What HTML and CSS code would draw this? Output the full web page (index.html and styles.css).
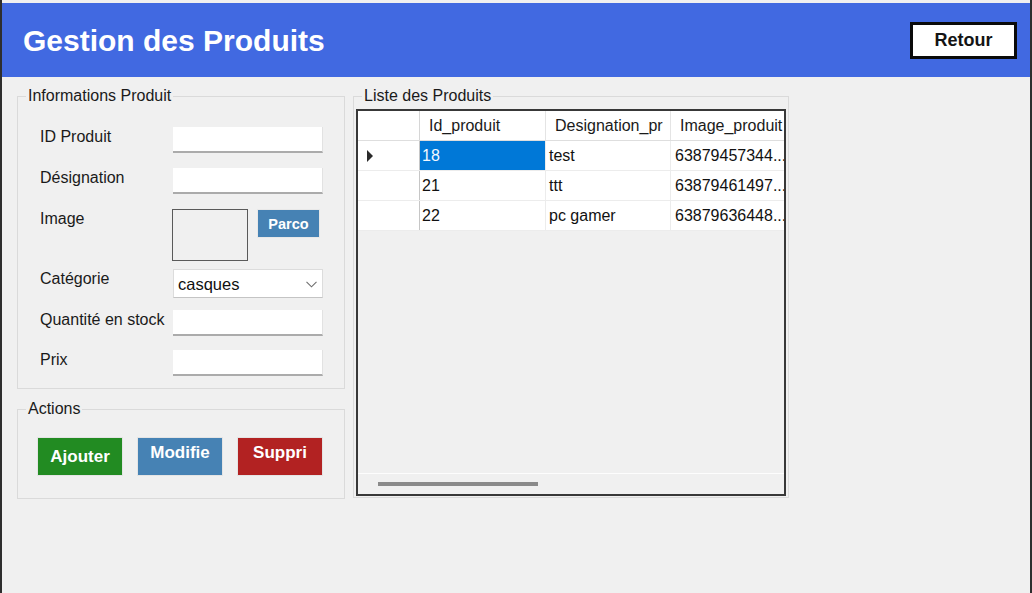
FILE: index.html
```html
<!DOCTYPE html>
<html lang="fr">
<head>
<meta charset="utf-8">
<title>Gestion des Produits</title>
<link rel="stylesheet" href="styles.css">
</head>
<body>
<div class="window">
  <header class="topbar">
    <h1 class="title">Gestion des Produits</h1>
    <button class="btn-back">Retour</button>
  </header>
  <main class="content">
    <div class="left-col">
      <fieldset class="group">
        <legend class="group-title">Informations Produit</legend>
        <div class="form">
          <div class="label">ID Produit</div>
          <div class="textbox"></div>
          <div class="label">Désignation</div>
          <div class="textbox"></div>
          <div class="label">Image</div>
          <div class="image-field">
            <div class="picture"></div>
            <button class="btn-browse">Parco</button>
          </div>
          <div class="label">Catégorie</div>
          <div class="combo">
            <span class="combo-text">casques</span>
            <svg class="combo-arrow" width="11" height="7" viewBox="0 0 11 7"><path d="M0.5 0.8 L5.5 5.8 L10.5 0.8" fill="none" stroke="#6e6e6e" stroke-width="1.1"/></svg>
          </div>
          <div class="label">Quantité en stock</div>
          <div class="textbox"></div>
          <div class="label">Prix</div>
          <div class="textbox"></div>
        </div>
      </fieldset>
      <fieldset class="group group-actions">
        <legend class="group-title">Actions</legend>
        <div class="actions">
          <button class="btn btn-add">Ajouter</button>
          <button class="btn btn-edit">Modifie</button>
          <button class="btn btn-del">Suppri</button>
        </div>
      </fieldset>
    </div>
    <fieldset class="group group-list">
      <legend class="group-title">Liste des Produits</legend>
      <div class="list-inner">
        <div class="grid">
          <div class="grid-rows">
            <div class="grid-row grid-head">
              <div class="cell rowhead"></div>
              <div class="cell col-id">Id_produit</div>
              <div class="cell col-des">Designation_pr</div>
              <div class="cell col-img">Image_produit</div>
            </div>
            <div class="grid-row">
              <div class="cell rowhead"><span class="row-marker"></span></div>
              <div class="cell col-id selected">18</div>
              <div class="cell col-des">test</div>
              <div class="cell col-img">63879457344...</div>
            </div>
            <div class="grid-row">
              <div class="cell rowhead"></div>
              <div class="cell col-id">21</div>
              <div class="cell col-des">ttt</div>
              <div class="cell col-img">63879461497...</div>
            </div>
            <div class="grid-row">
              <div class="cell rowhead"></div>
              <div class="cell col-id">22</div>
              <div class="cell col-des">pc gamer</div>
              <div class="cell col-img">63879636448...</div>
            </div>
          </div>
          <div class="hscroll"><div class="hscroll-thumb"></div></div>
        </div>
      </div>
    </fieldset>
  </main>
</div>
</body>
</html>
```
FILE: styles.css
```css
html, body {
  margin: 0;
  padding: 0;
  background: #f0f0f0;
}
body {
  font-family: "Liberation Sans", Arial, sans-serif;
  color: #1a1a1a;
}
.window {
  width: 1032px;
  height: 593px;
  box-sizing: border-box;
  border-left: 2px solid #2e2e2e;
  border-right: 2px solid #2e2e2e;
  padding-top: 3px;
  background: #f0f0f0;
  overflow: hidden;
}
.topbar {
  height: 74px;
  background: #4169e1;
  display: flex;
  align-items: center;
  justify-content: space-between;
  padding: 0 13px 0 21px;
}
.title {
  margin: 0;
  font-size: 30px;
  font-weight: bold;
  color: #fff;
  line-height: 34px;
  padding-top: 1px;
}
.btn-back {
  width: 107px;
  height: 37px;
  box-sizing: border-box;
  border: 3px solid #0a0a0a;
  background: #fff;
  font-family: "Liberation Sans", Arial, sans-serif;
  font-weight: bold;
  font-size: 18px;
  color: #141414;
  padding: 0;
  margin-top: 1px;
}
.content {
  display: flex;
  align-items: flex-start;
  gap: 8px;
  padding: 10px 0 0 15px;
}
.left-col {
  width: 328px;
  display: flex;
  flex-direction: column;
}
.group {
  margin: 0;
  padding: 0;
  border: 1px solid #dadada;
  min-width: 0;
}
.group-title {
  margin-left: 8px;
  padding: 0 2px;
  font-size: 16px;
  line-height: 18px;
  color: #1a1a1a;
}
.form {
  display: grid;
  grid-template-columns: 133px 150px;
  grid-template-rows: 41px 41px 60px 41px 40px 27px;
  align-items: start;
  padding: 22px 0 11px 22px;
}
.label {
  font-size: 16px;
  line-height: 18px;
  padding-top: 1px;
  white-space: nowrap;
  color: #1a1a1a;
}
.textbox {
  width: 150px;
  height: 26px;
  box-sizing: border-box;
  background: #fff;
  border-bottom: 2px solid #ababab;
  border-right: 1px solid #e2e2e2;
}
.image-field {
  display: flex;
  align-items: flex-start;
  margin-left: -1px;
}
.picture {
  width: 76px;
  height: 52px;
  box-sizing: border-box;
  border: 1px solid #5a5a5a;
}
.btn-browse {
  margin-left: 9px;
  width: 63px;
  height: 29px;
  box-sizing: border-box;
  border: 1px solid #e8e8e8;
  background: #4682b4;
  color: #fff;
  font-family: "Liberation Sans", Arial, sans-serif;
  font-weight: bold;
  font-size: 14.5px;
  padding: 0;
}
.combo {
  width: 150px;
  height: 29px;
  box-sizing: border-box;
  background: #fff;
  border: 1px solid #dcdcdc;
  border-bottom-color: #c4c4c4;
  display: flex;
  align-items: center;
  justify-content: space-between;
  padding: 0 5px 0 4px;
}
.combo-text {
  font-size: 16.5px;
  color: #111;
  padding-top: 1px;
}
.combo-arrow {
  display: block;
  margin-top: 1px;
}
.group-actions {
  margin-top: 11px;
}
.actions {
  display: flex;
  gap: 14px;
  padding: 19px 0 22px 19px;
}
.btn {
  width: 86px;
  height: 39px;
  box-sizing: border-box;
  border: 1px solid #e4e4e4;
  color: #fff;
  font-family: "Liberation Sans", Arial, sans-serif;
  font-weight: bold;
  font-size: 17px;
  padding: 0;
}
.btn-add {
  background: #228b22;
}
.btn-edit {
  background: #4682b4;
  padding-bottom: 7px;
}
.btn-del {
  background: #b22222;
  padding-bottom: 7px;
}
.group-list {
  width: 436px;
  box-sizing: border-box;
}
.list-inner {
  padding: 4px 2px 1px 2px;
}
.grid {
  width: 430px;
  height: 387px;
  box-sizing: border-box;
  border: 2px solid #383838;
  background: #f0f0f0;
  display: flex;
  flex-direction: column;
  overflow: hidden;
}
.grid-rows {
  flex: 1;
}
.grid-row {
  display: flex;
  height: 30px;
  box-sizing: border-box;
  border-bottom: 1px solid #ececec;
  background: #fff;
  width: 460px;
}
.grid-head {
  border-bottom-color: #dedede;
}
.cell {
  box-sizing: border-box;
  height: 29px;
  line-height: 30px;
  font-size: 16px;
  white-space: nowrap;
  overflow: hidden;
  border-right: 1px solid #ececec;
  color: #111;
}
.rowhead {
  width: 62px;
  border-right-color: #c6c6c6;
  display: flex;
  align-items: center;
  padding-left: 9px;
}
.col-id {
  width: 126px;
  padding-left: 2px;
}
.col-des {
  width: 125px;
  padding-left: 3px;
}
.col-img {
  width: 140px;
  padding-left: 4px;
  border-right: none;
}
.grid-head .cell {
  padding-left: 9px;
  color: #1a1a1a;
  border-right-color: #e4e4e4;
}
.grid-head .rowhead {
  border-right-color: #d6d6d6;
}
.selected {
  background: #0078d7;
  color: #f4f8ff;
}
.row-marker {
  display: block;
  width: 0;
  height: 0;
  border-left: 6px solid #2a2a2a;
  border-top: 6px solid transparent;
  border-bottom: 6px solid transparent;
}
.hscroll {
  height: 20px;
  border-top: 1px solid #fdfdfd;
  display: flex;
  align-items: center;
  padding-left: 20px;
}
.hscroll-thumb {
  width: 160px;
  height: 4px;
  background: #8a8a8a;
  margin-top: -1px;
}
```
